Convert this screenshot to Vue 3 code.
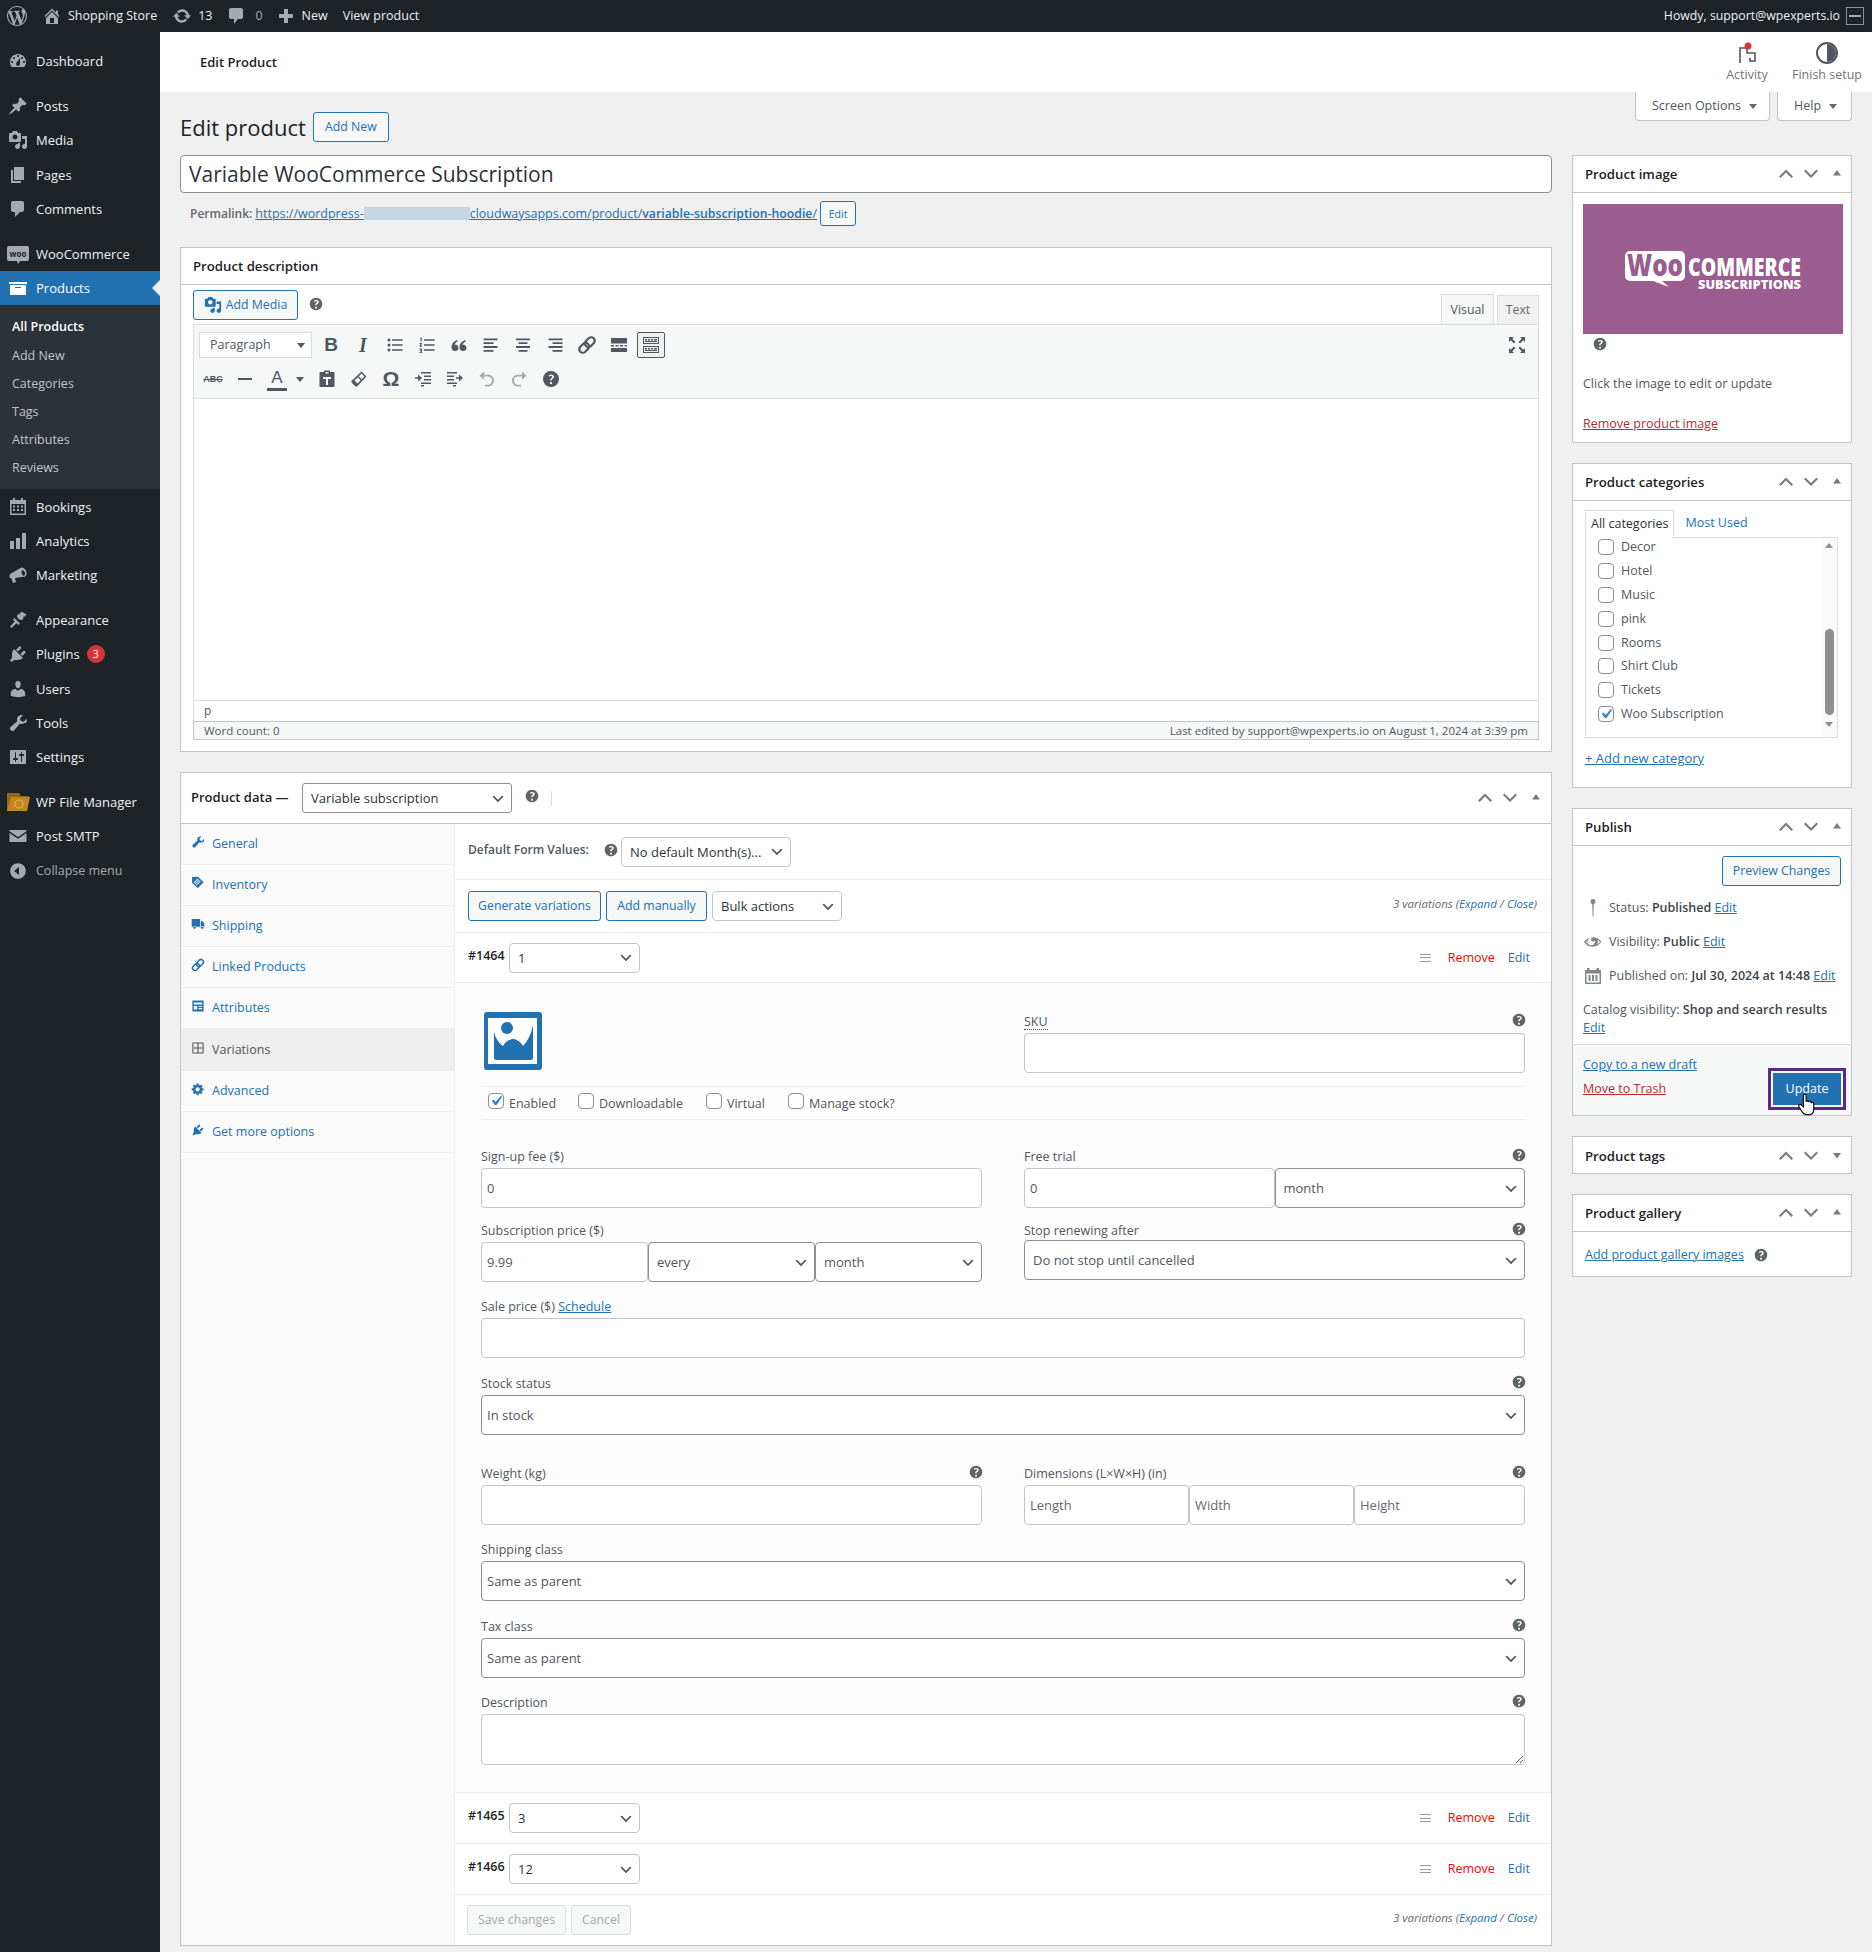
<template>
  <div class="page">
    <header class="adminbar">
      <Icon name="wp" class="bar-wp" />
      <Icon name="home" class="bar-home" />
      <span class="bar-text site">Shopping Store</span>
      <Icon name="update" class="bar-update" />
      <span class="bar-text">13</span>
      <Icon name="comment" class="bar-comment" />
      <span class="bar-text muted">0</span>
      <Icon name="plus" class="bar-plus" />
      <span class="bar-text">New</span>
      <span class="bar-text view">View product</span>
      <span class="bar-text howdy">Howdy, support@wpexperts.io</span>
      <span class="avatar"><i></i></span>
    </header>

    <div class="layout">
      <aside class="sidebar">
        <template v-for="item in menu" :key="item.label">
          <div class="menu-item" :class="{ sep: item.sep, current: item.current, dim: item.dim }">
            <svg v-if="item.icon === 'woo'" class="menu-icon woo-icon" viewBox="0 0 22 22">
              <path d="M2 3h18a2 2 0 0 1 2 2v11a2 2 0 0 1-2 2h-7l-2 3-1-3H2a2 2 0 0 1-2-2V5a2 2 0 0 1 2-2z" fill="#a7aaad" />
              <text x="11" y="13.500" text-anchor="middle" font-size="8" font-weight="700" fill="#1d2327">woo</text>
            </svg>
            <svg v-else-if="item.icon === 'folder'" class="menu-icon folder-icon" viewBox="0 0 24 20">
              <path d="M1 1h12l2 3h8l-2 15H1z" fill="#8f6a1c" />
              <path d="M5 5h19l-3 14H1z" fill="#c2851f" />
              <circle cx="13" cy="12" r="4" fill="none" stroke="#e0b266" stroke-width="1.200" />
            </svg>
            <Icon v-else :name="item.icon" class="menu-icon" />
            <span>{{ item.label }}</span>
            <b v-if="item.badge" class="badge">{{ item.badge }}</b>
          </div>
          <div v-if="item.current" class="submenu">
            <div v-for="(sub, i) in submenu" :key="sub" class="sub-item" :class="{ on: i === 0 }">{{ sub }}</div>
          </div>
        </template>
      </aside>

      <div class="content">
        <div class="wc-header">
          <span class="wc-title">Edit Product</span>
          <div class="activity">
            <svg class="act-icon" viewBox="0 0 24 24">
              <path d="M5 22V7h7v5h8v8h-5v-3" fill="none" stroke="#50575e" stroke-width="1.600" />
              <circle cx="13" cy="5" r="3.500" fill="#d63638" />
            </svg>
            <span>Activity</span>
          </div>
          <div class="activity finish">
            <svg class="act-icon" viewBox="0 0 24 24">
              <circle cx="12" cy="12" r="10" fill="#fff" stroke="#50575e" stroke-width="2" />
              <path d="M12 3a9 9 0 0 1 0 18z" fill="#50575e" />
            </svg>
            <span>Finish setup</span>
          </div>
        </div>

        <div class="head-row">
          <div class="heading">
            <h1>Edit product</h1>
            <a class="btn add-new">Add New</a>
          </div>
          <div class="screen-tabs">
            <div class="screen-tab options">Screen Options <i class="tri"></i></div>
            <div class="screen-tab help-tab">Help <i class="tri"></i></div>
          </div>
        </div>

        <div class="columns">
          <div class="main-col">
            <input class="title-input" type="text" value="Variable WooCommerce Subscription" />
            <div class="permalink">
              <b>Permalink:</b>
              <a class="link perma">https://wordpress-<span class="blur"></span>cloudwaysapps.com/product/<b>variable-subscription-hoodie</b>/</a>
              <a class="btn small-btn">Edit</a>
            </div>

            <section class="box desc-box">
              <h2 class="box-title">Product description</h2>
              <div class="editor">
                <div class="editor-top">
                  <a class="btn media-btn"><Icon name="media" class="media-icon" />Add Media</a>
                  <Icon name="help" class="help media-help" />
                  <div class="editor-tabs">
                    <span class="etab on">Visual</span>
                    <span class="etab">Text</span>
                  </div>
                </div>
                <div class="toolbar">
                  <div class="tb-row">
                    <div class="format">Paragraph<i class="tri dark"></i></div>
                    <span class="tb tb-first txt-b">B</span>
                    <span class="tb txt-i">I</span>
                    <Icon v-for="n in row1" :key="n" :name="n" class="tb" />
                    <span class="tb sink"><Icon name="sink" /></span>
                    <Icon name="fullscreen" class="tb tb-full" />
                  </div>
                  <div class="tb-row">
                    <span class="tb txt-abc">ABC</span>
                    <Icon name="hr" class="tb" />
                    <span class="tb color-btn"><span class="txt-a">A</span></span>
                    <i class="tri dark color-tri"></i>
                    <Icon v-for="n in row2a" :key="n" :name="n" class="tb" />
                    <span class="tb txt-omega">Ω</span>
                    <Icon v-for="n in row2b" :key="n" :name="n" class="tb" :class="{ off: n === 'undo' || n === 'redo' }" />
                  </div>
                </div>
                <div class="edit-area"></div>
                <div class="edit-path">p</div>
                <div class="edit-status">
                  <span>Word count: 0</span>
                  <span>Last edited by support@wpexperts.io on August 1, 2024 at 3:39 pm</span>
                </div>
              </div>
            </section>

            <section class="box data-box">
              <div class="data-head">
                <b class="data-label">Product data —</b>
                <select class="sel type-sel"><option>Variable subscription</option></select>
                <Icon name="help" class="help type-help" />
                <i class="data-sep"></i>
                <Icon name="handles" vb="0 0 64 20" class="handles" />
              </div>
              <div class="data-body">
                <ul class="data-tabs">
                  <li v-for="t in dataTabs" :key="t.label" :class="{ on: t.on }">
                    <Icon :name="t.icon" class="dt-icon" />
                    <span>{{ t.label }}</span>
                  </li>
                </ul>
                <div class="data-panel">
                  <div class="defaults-row">
                    <b class="defaults-label">Default Form Values:</b>
                    <Icon name="help" class="help" />
                    <select class="sel soft defaults-sel"><option>No default Month(s)...</option></select>
                  </div>
                  <div class="actions-row">
                    <a class="btn fill-btn gen-btn">Generate variations</a>
                    <a class="btn fill-btn">Add manually</a>
                    <select class="sel soft bulk-sel"><option>Bulk actions</option></select>
                    <span class="count">3 variations (<a class="link plain">Expand</a> / <a class="link plain">Close</a>)</span>
                  </div>
                  <div class="var-row">
                    <b class="var-id">#1464</b>
                    <select class="sel soft var-sel"><option>1</option></select>
                    <span class="var-tools">
                      <i class="burger"></i>
                      <a class="remove">Remove</a>
                      <a class="link plain">Edit</a>
                    </span>
                  </div>

                  <div class="var-form">
                    <div class="form-top">
                      <svg class="thumb" viewBox="0 0 58 58">
                        <rect width="58" height="58" rx="3" fill="#2271b1" />
                        <rect x="4" y="6" width="49" height="46" fill="#fff" />
                        <path d="M10 19c1 7 5 12 9 15 3-5 7-7 10-7s7 2 10 7c4-4 8-11 10-21v33a2 2 0 0 1-2 2H12a2 2 0 0 1-2-2z" fill="#2271b1" />
                        <circle cx="23" cy="16" r="6" fill="#2271b1" />
                      </svg>
                      <div class="field sku">
                        <label class="lab"><span class="dotted">SKU</span><Icon name="help" class="help" /></label>
                        <input class="inp" type="text" />
                      </div>
                    </div>

                    <div class="checks">
                      <label class="chk enabled"><input type="checkbox" checked /><span>Enabled</span></label>
                      <label class="chk down"><input type="checkbox" /><span>Downloadable</span></label>
                      <label class="chk virt"><input type="checkbox" /><span>Virtual</span></label>
                      <label class="chk"><input type="checkbox" /><span>Manage stock?</span></label>
                    </div>

                    <div class="cols first-cols">
                      <div class="field">
                        <label class="lab"><span>Sign-up fee ($)</span></label>
                        <input class="inp" type="text" value="0" />
                      </div>
                      <div class="field">
                        <label class="lab"><span>Free trial</span><Icon name="help" class="help" /></label>
                        <div class="joined half">
                          <input class="inp" type="text" value="0" />
                          <select class="sel tall"><option>month</option></select>
                        </div>
                      </div>
                    </div>

                    <div class="cols">
                      <div class="field">
                        <label class="lab"><span>Subscription price ($)</span></label>
                        <div class="joined thirds">
                          <input class="inp" type="text" value="9.99" />
                          <select class="sel tall"><option>every</option></select>
                          <select class="sel tall"><option>month</option></select>
                        </div>
                      </div>
                      <div class="field stop-field">
                        <label class="lab"><span>Stop renewing after</span><Icon name="help" class="help" /></label>
                        <select class="sel tall"><option>Do not stop until cancelled</option></select>
                      </div>
                    </div>

                    <div class="field">
                      <label class="lab"><span>Sale price ($) <a class="link">Schedule</a></span></label>
                      <input class="inp" type="text" />
                    </div>

                    <div class="field wide-gap">
                      <label class="lab"><span>Stock status</span><Icon name="help" class="help" /></label>
                      <select class="sel tall near"><option>In stock</option></select>
                    </div>

                    <div class="cols weight-cols">
                      <div class="field">
                        <label class="lab"><span>Weight (kg)</span><Icon name="help" class="help" /></label>
                        <input class="inp" type="text" />
                      </div>
                      <div class="field">
                        <label class="lab"><span>Dimensions (L×W×H) (in)</span><Icon name="help" class="help" /></label>
                        <div class="joined dims">
                          <input class="inp" type="text" placeholder="Length" />
                          <input class="inp" type="text" placeholder="Width" />
                          <input class="inp" type="text" placeholder="Height" />
                        </div>
                      </div>
                    </div>

                    <div class="field">
                      <label class="lab"><span>Shipping class</span></label>
                      <select class="sel tall near"><option>Same as parent</option></select>
                    </div>
                    <div class="field wide-gap">
                      <label class="lab"><span>Tax class</span><Icon name="help" class="help" /></label>
                      <select class="sel tall near"><option>Same as parent</option></select>
                    </div>
                    <div class="field">
                      <label class="lab"><span>Description</span><Icon name="help" class="help" /></label>
                      <textarea class="inp area"></textarea>
                    </div>
                  </div>

                  <div v-for="v in otherVariations" :key="v.id" class="var-row tall-row">
                    <b class="var-id">#{{ v.id }}</b>
                    <select class="sel soft var-sel"><option>{{ v.value }}</option></select>
                    <span class="var-tools">
                      <i class="burger"></i>
                      <a class="remove">Remove</a>
                      <a class="link plain">Edit</a>
                    </span>
                  </div>

                  <div class="actions-row last">
                    <a class="btn off-btn save-btn">Save changes</a>
                    <a class="btn off-btn">Cancel</a>
                    <span class="count">3 variations (<a class="link plain">Expand</a> / <a class="link plain">Close</a>)</span>
                  </div>
                </div>
              </div>
            </section>
          </div>

          <aside class="side-col">
            <section class="box side-box image-box">
              <div class="side-head"><h2>Product image</h2><Icon name="handles" vb="0 0 64 20" class="handles" /></div>
              <div class="side-body">
                <svg class="woo-logo" viewBox="0 0 260 130">
                  <rect width="260" height="130" fill="#9b5c8f" />
                  <path d="M47 47h50a5 5 0 0 1 5 5v20a5 5 0 0 1-5 5H79l7 6-16-6H47a5 5 0 0 1-5-5V52a5 5 0 0 1 5-5z" fill="#fff" />
                  <text x="44" y="72" font-size="30" font-weight="800" fill="#9b5c8f" textLength="56" lengthAdjust="spacingAndGlyphs">Woo</text>
                  <text x="105" y="72" font-size="24" font-weight="800" fill="#fff" textLength="113" lengthAdjust="spacingAndGlyphs">COMMERCE</text>
                  <text x="115" y="85" font-size="13" font-weight="800" fill="#fff" textLength="103" lengthAdjust="spacingAndGlyphs">SUBSCRIPTIONS</text>
                </svg>
                <Icon name="help" class="help image-help" />
                <p class="image-note">Click the image to edit or update</p>
                <a class="danger-link">Remove product image</a>
              </div>
            </section>

            <section class="box side-box cat-box">
              <div class="side-head"><h2>Product categories</h2><Icon name="handles" vb="0 0 64 20" class="handles" /></div>
              <div class="cat-body">
                <div class="cat-tabs">
                  <span class="cat-tab on">All categories</span>
                  <a class="cat-tab link plain">Most Used</a>
                </div>
                <div class="cat-list">
                  <div class="cat-items">
                    <label v-for="c in categories" :key="c" class="cat-item">
                      <input type="checkbox" :checked="c === 'Woo Subscription'" /><span>{{ c }}</span>
                    </label>
                  </div>
                  <div class="scrollbar">
                    <i class="sb-up"></i>
                    <i class="sb-thumb"></i>
                    <i class="sb-down"></i>
                  </div>
                </div>
                <a class="link add-cat">+ Add new category</a>
              </div>
            </section>

            <section class="box side-box publish-box">
              <div class="side-head"><h2>Publish</h2><Icon name="handles" vb="0 0 64 20" class="handles" /></div>
              <div class="pub-body">
                <div class="pub-preview"><a class="btn">Preview Changes</a></div>
                <div class="pub-row"><Icon name="pin" class="pub-icon" /><span>Status: <b>Published</b> <a class="link">Edit</a></span></div>
                <div class="pub-row"><Icon name="eye" class="pub-icon" /><span>Visibility: <b>Public</b> <a class="link">Edit</a></span></div>
                <div class="pub-row"><Icon name="calendar" class="pub-icon" /><span>Published on: <b>Jul 30, 2024 at 14:48</b> <a class="link">Edit</a></span></div>
                <div class="pub-catalog">Catalog visibility: <b>Shop and search results</b><br /><a class="link">Edit</a></div>
              </div>
              <div class="pub-foot">
                <div class="pub-links">
                  <a class="link">Copy to a new draft</a>
                  <a class="danger-link">Move to Trash</a>
                </div>
                <div class="update-wrap">
                  <a class="update-btn">Update</a>
                  <svg class="cursor" viewBox="0 0 20 26">
                    <path d="M6 2.500c0-2 3-2 3 0v7c.5-1.500 3-1.500 3 .3.500-1.300 2.800-1 2.800.7.800-1 2.700-.5 2.700 1.200v6c0 3-1.500 6-5 6H9c-2.500 0-3.500-1.500-5-4l-3-5c-1-2 1.500-3.200 3-1.500l2 2z" fill="#fff" stroke="#000" stroke-width="1.200" />
                  </svg>
                </div>
              </div>
            </section>

            <section class="box side-box tags-box">
              <div class="side-head"><h2>Product tags</h2><Icon name="handlesDown" vb="0 0 64 20" class="handles" /></div>
            </section>

            <section class="box side-box gallery-box">
              <div class="side-head"><h2>Product gallery</h2><Icon name="handles" vb="0 0 64 20" class="handles" /></div>
              <div class="gallery-body">
                <a class="link">Add product gallery images</a>
                <Icon name="help" class="help" />
              </div>
            </section>
          </aside>
        </div>
      </div>
    </div>
  </div>
</template>

<script setup>
import { h } from 'vue'

const icons = {
  wp: 'M20 10c0-5.510-4.490-10-10-10C4.480 0 0 4.490 0 10c0 5.520 4.480 10 10 10 5.510 0 10-4.480 10-10zM7.780 15.370L4.370 6.220c.55-.02 1.170-.08 1.170-.08.5-.06.44-1.130-.06-1.110 0 0-1.450.11-2.370.11-.18 0-.37 0-.58-.01C4.120 2.690 6.870 1.110 10 1.110c2.330 0 4.450.87 6.050 2.340-.68-.11-1.650.39-1.650 1.580 0 .74.45 1.360.9 2.100.35.61.55 1.360.55 2.460 0 1.490-1.400 5-1.400 5l-3.030-8.370c.54-.02.82-.17.82-.17.5-.05.44-1.250-.06-1.220 0 0-1.440.12-2.380.12-.87 0-2.330-.12-2.330-.12-.5-.03-.56 1.200-.06 1.220l.92.08 1.260 3.410zM17.410 10c.24-.64.74-1.870.43-4.250.7 1.290 1.050 2.710 1.050 4.250 0 3.290-1.730 6.240-4.400 7.780.97-2.590 1.940-5.200 2.920-7.780zM6.100 18.090C3.120 16.650 1.110 13.530 1.110 10c0-1.300.23-2.480.72-3.590C3.250 10.300 4.670 14.200 6.100 18.090zm4.030-6.630l2.580 6.980c-.86.29-1.760.45-2.710.45-.79 0-1.570-.11-2.290-.33.81-2.380 1.620-4.730 2.420-7.100z',
  home: 'M16 8.500l1.530 1.530-1.060 1.060L10 4.620l-6.470 6.470-1.060-1.060L10 2.500l4 4v-2h2v4zm-6-2.460l6 5.990V18H4v-5.970zM12 17v-5H8v5h4z',
  update: 'M10.200 3.280c3.530 0 6.430 2.610 6.920 6h2.080l-3.500 4-3.500-4h2.320c-.45-1.970-2.210-3.440-4.320-3.440-1.450 0-2.730.71-3.540 1.780L4.950 5.660C6.230 4.200 8.110 3.280 10.200 3.280zm-.4 13.440c-3.520 0-6.430-2.610-6.920-6H.8l3.500-4c1.170 1.330 2.330 2.670 3.500 4H5.480c.45 1.970 2.210 3.440 4.320 3.440 1.450 0 2.730-.71 3.540-1.770l1.710 1.950c-1.280 1.460-3.150 2.380-5.250 2.380z',
  comment: 'M5 2h10c1.100 0 2 .9 2 2v7c0 1.100-.9 2-2 2h-3l-4 5v-5H5c-1.100 0-2-.9-2-2V4c0-1.100.9-2 2-2z',
  plus: 'M17 8v4h-5v5H8v-5H3V8h5V3h4v5z',
  dashboard: 'M3.760 16h12.480c1.100-1.370 1.760-3.110 1.760-5 0-4.420-3.580-8-8-8s-8 3.580-8 8c0 1.890.66 3.630 1.760 5zM10 4c.55 0 1 .45 1 1s-.45 1-1 1-1-.45-1-1 .45-1 1-1zM6 6c.55 0 1 .45 1 1s-.45 1-1 1-1-.45-1-1 .45-1 1-1zm8 0c.55 0 1 .45 1 1s-.45 1-1 1-1-.45-1-1 .45-1 1-1zm-5.370 5.550L12 7v6c0 1.100-.9 2-2 2s-2-.9-2-2c0-.57.24-1.080.63-1.450zM4 10c.55 0 1 .45 1 1s-.45 1-1 1-1-.45-1-1 .45-1 1-1zm12 0c.55 0 1 .45 1 1s-.45 1-1 1-1-.45-1-1 .45-1 1-1z',
  post: 'M10.440 3.020l1.820-1.820 6.360 6.350-1.830 1.820c-1.050-.68-2.480-.57-3.410.36l-.75.75c-.92.93-1.040 2.350-.35 3.410l-1.830 1.820-2.410-2.410-2.800 2.790c-.42.42-3.380 2.710-3.800 2.290s1.860-3.390 2.280-3.810l2.790-2.790L4.100 9.360l1.830-1.820c1.050.69 2.480.57 3.400-.36l.75-.75c.93-.92 1.050-2.350.36-3.410z',
  media: 'M13 11V4c0-.55-.45-1-1-1h-1.670L9 1H5L3.670 3H2c-.55 0-1 .45-1 1v7c0 .55.45 1 1 1h10c.55 0 1-.45 1-1zM7 4.500c1.380 0 2.500 1.120 2.500 2.500S8.380 9.500 7 9.500 4.500 8.380 4.500 7 5.620 4.500 7 4.500zM14 6h5v10.500c0 1.380-1.120 2.500-2.500 2.500S14 17.880 14 16.500s1.120-2.500 2.500-2.500c.17 0 .34.02.5.05V9h-3V6zm-4 8.050V13h2v3.500c0 1.380-1.120 2.500-2.500 2.500S7 17.880 7 16.500 8.120 14 9.500 14c.17 0 .34.02.5.05z',
  page: 'M6 15V2h10v13H6zm-1 1h8v2H3V5h2v11z',
  comments: 'M5 2h9c1.100 0 2 .9 2 2v7c0 1.100-.9 2-2 2h-2l-5 5v-5H5c-1.100 0-2-.9-2-2V4c0-1.100.9-2 2-2z',
  archive: 'M19 4v2H1V4h18zM2 7h16v10H2V7zm11 3V9H7v1h6z',
  bookings: 'M5 1h2v2h6V1h2v2h3v15H2V3h3zM3.500 7v9.500h13V7zM5 8.500h2v2H5zM9 8.500h2v2H9zM13 8.500h2v2h-2zM5 12h2v2H5zM9 12h2v2H9zM13 12h2v2h-2z',
  chart: 'M18 18V2h-4v16h4zm-6 0V7H8v11h4zm-6 0v-8H2v8h4z',
  megaphone: 'M18.150 5.940c.46 1.620.38 3.220-.02 4.260-.41 1.040-1.170 1.550-1.970 1.490L7 13l1 4-3 1-1.500-4.600c-.9-.1-1.700-.6-2-1.600-.4-1.500.4-2.800 1.500-3.300L12.500 3c1-.7 2.100-.7 3 .1.800.7 2.200 1.400 2.650 2.840zM14.600 5.200c-.9.200-1.300 1.600-.9 3.100.4 1.500 1.400 2.500 2.300 2.300.9-.2 1.300-1.600.9-3.100-.4-1.500-1.400-2.500-2.300-2.300z',
  brush: 'M13.500 1.500l5 3c-.8 1.500-2 2.500-3 2l-.5 3-3 .5-3-3 .5-2.500c1.700-.3 3-1.300 4-3zM6.500 8l5.500 5.500-1.800 1.500-1.700-1.700-4.500 4.200c-1 .9-2.400-.5-1.500-1.500l4.200-4.500L5 9.800z',
  plugin: 'M13.110 4.360L9.870 7.600 8 5.730l3.240-3.240c.35-.34 1.050-.2 1.560.32.52.51.66 1.210.31 1.550zm-8 1.770l.91-1.120 9.010 9.010-1.190.84c-.71.71-2.630 1.160-3.820 1.160H6.140L4.900 17.260c-.59.59-1.540.59-2.120 0-.59-.58-.59-1.530 0-2.120l1.240-1.240v-3.880c0-1.130.4-3.190 1.090-3.890zm7.260 3.970l3.240-3.240c.34-.35 1.040-.21 1.550.31.52.51.66 1.210.31 1.550l-3.240 3.250z',
  users: 'M10 9.250c-2.270 0-2.730-3.440-2.730-3.440C7 4.020 7.820 2 9.970 2c2.160 0 2.980 2.020 2.710 3.810 0 0-.41 3.440-2.680 3.440zm0 2.570L12.720 10c2.390 0 4.520 2.330 4.520 4.530v2.490s-3.650 1.130-7.240 1.130c-3.650 0-7.240-1.130-7.240-1.130v-2.490c0-2.250 1.940-4.480 4.470-4.480z',
  tools: 'M16.680 9.770c-1.340 1.340-3.300 1.670-4.950.99l-5.410 6.520c-.99.99-2.590.99-3.570 0-.99-.98-.99-2.580 0-3.570l6.520-5.420c-.68-1.650-.35-3.610.99-4.950 1.280-1.280 3.120-1.620 4.710-1.050l-2.900 2.900.85 2.700 2.710.84 2.900-2.900c.57 1.590.23 3.430-1.050 4.710z',
  settings: 'M18 16V4c0-.55-.45-1-1-1H3c-.55 0-1 .45-1 1v12c0 .55.45 1 1 1h14c.55 0 1-.45 1-1zM8 11h1c.55 0 1 .45 1 1s-.45 1-1 1H8v1.500c0 .28-.22.5-.5.5s-.5-.22-.5-.5V13H6c-.55 0-1-.45-1-1s.45-1 1-1h1V5.500c0-.28.22-.5.5-.5s.5.22.5.5V11zm5-2h-1c-.55 0-1-.45-1-1s.45-1 1-1h1V5.500c0-.28.22-.5.5-.5s.5.22.5.5V7h1c.55 0 1 .45 1 1s-.45 1-1 1h-1v5.500c0 .28-.22.5-.5.5s-.5-.22-.5-.5V9z',
  email: 'M2 4h16c.3 0 .5.2.5.5v.8L10 11 1.500 5.300v-.8c0-.3.2-.5.5-.5zM1.500 7l8.500 5.700L18.500 7v8.500c0 .3-.2.5-.5.5H2c-.3 0-.5-.2-.5-.5z',
  collapse: 'M10 2.160c4.330 0 7.840 3.510 7.840 7.840 0 4.330-3.510 7.840-7.840 7.840-4.330 0-7.840-3.510-7.840-7.840 0-4.330 3.510-7.840 7.840-7.840zM11 14V6l-5 4z',
  help: 'M17 10c0-3.870-3.140-7-7-7-3.870 0-7 3.130-7 7 0 3.860 3.130 7 7 7 3.860 0 7-3.140 7-7zm-6.300 1.480H9.110v-.43c0-.38.08-.7.24-.98s.46-.57.88-.89c.41-.29.68-.53.81-.72.14-.19.2-.39.2-.63 0-.25-.09-.44-.28-.58-.19-.13-.45-.2-.79-.2-.58 0-1.250.19-2 .57l-.64-1.280c.87-.49 1.800-.74 2.770-.74.81 0 1.450.2 1.930.59.48.39.72.91.72 1.550 0 .43-.1.8-.29 1.110-.19.32-.57.67-1.110 1.060-.38.28-.61.49-.71.64-.09.14-.14.33-.14.57v.3zm-1.440 3.400c-.19-.18-.28-.43-.28-.75 0-.33.09-.59.27-.76.18-.18.44-.27.78-.27.33 0 .59.09.77.27.18.18.27.43.27.76 0 .32-.09.57-.27.75s-.44.27-.77.27c-.34 0-.6-.09-.77-.27z',
  handles: 'M0 12.500L7 5.500l7 7-1.500 1.500L7 8.500 1.500 14zM25 7l1.500-1.500L32 11l5.500-5.500L39 7l-7 7zM54 11.500l4-5.500 4 5.500z',
  handlesDown: 'M0 12.500L7 5.500l7 7-1.500 1.500L7 8.500 1.500 14zM25 7l1.500-1.500L32 11l5.500-5.500L39 7l-7 7zM54 7l4 5.500L62 7z',
  ul: 'M2.500 5a1.500 1.500 0 1 0 3 0 1.500 1.500 0 1 0-3 0zM2.500 10a1.500 1.500 0 1 0 3 0 1.500 1.500 0 1 0-3 0zM2.500 15a1.500 1.500 0 1 0 3 0 1.500 1.500 0 1 0-3 0zM7 4.300h10.500v1.400H7zM7 9.300h10.500v1.400H7zM7 14.300h10.500v1.400H7z',
  ol: 'M3.500 2.500h1.200v4H3.500zM2.500 8h2.500v1.200L3.800 10.800H5v1H2.500v-1l1.300-1.600H2.500zM2.500 13.500H5v4.500H2.500v-1h1.300v-.7H2.800v-1h1v-.8H2.500zM7 4.300h10.500v1.400H7zM7 9.300h10.500v1.400H7zM7 14.300h10.500v1.400H7z',
  quote: 'M9.500 13.200c0 1.700-1.400 2.800-3.300 2.800-2.200 0-3.700-1.500-3.700-3.800C2.500 9 4.900 6.200 8 5l.8 1.300C7.200 7 6 8.400 5.600 9.900c.3-.1.7-.2 1.100-.2 1.600 0 2.800 1.600 2.800 3.500zM17.500 13.200c0 1.700-1.400 2.800-3.300 2.800-2.200 0-3.700-1.500-3.700-3.800 0-3.200 2.400-6 5.500-7.200l.8 1.300c-1.600.7-2.800 2.100-3.200 3.600.3-.1.7-.2 1.100-.2 1.600 0 2.800 1.600 2.800 3.500z',
  alignL: 'M2.500 3.500h14v1.800h-14zM2.500 7.300h10v1.800h-10zM2.500 11.100h14v1.800h-14zM2.500 14.900h10v1.800h-10z',
  alignC: 'M3 3.500h14v1.800H3zM5.500 7.300h9v1.800h-9zM3 11.100h14v1.800H3zM5.500 14.900h9v1.800h-9z',
  alignR: 'M3.500 3.500h14v1.800h-14zM7.500 7.300h10v1.800h-10zM3.500 11.100h14v1.800h-14zM7.500 14.900h10v1.800h-10z',
  more: 'M2 3h16v5.500H2zM2 10h3v1.500H2zM6.500 10h3v1.500h-3zM11 10h3v1.500h-3zM15.500 10H18v1.500h-2.500zM2 13h16v4H2z',
  sink: 'M2 2h16v7H2zM3 3v5h14V3zM4 4h2v1.500H4zM7 4h2v1.500H7zM10 4h2v1.500h-2zM13 4h3v1.500h-3zM4 6h12v1H4zM2 11h16v7H2zM3 12v5h14v-5zM4 13h2v1.500H4zM7 13h2v1.500H7zM10 13h2v1.500h-2zM13 13h3v1.500h-3zM4 15h12v1H4z',
  fullscreen: 'M2 2h5L5.300 3.700 8.500 7 7 8.500 3.700 5.300 2 7zM18 2v5l-1.700-1.700L13 8.500 11.500 7l3.200-3.300L13 2zM2 18v-5l1.700 1.700L7 11.500 8.500 13l-3.200 3.300L7 18zM18 18h-5l1.700-1.700L11.500 13l1.500-1.500 3.300 3.200L18 13z',
  hr: 'M3 9h14v2H3z',
  paste: 'M7 1.500h6V3h3.500c.6 0 1 .4 1 1v13c0 .6-.4 1-1 1h-13c-.6 0-1-.4-1-1V4c0-.6.4-1 1-1H7zM8.500 3v1.500h3V3zM6 8v2h3v6h2v-6h3V8z',
  eraser: 'M12.500 2.500l5 5-9 9.500c-.8.800-1.800.800-2.500 0L3 14c-.8-.8-.8-1.800 0-2.500zM12.500 4.500l-7 7 3 3 7-7zM9.700 7.300l3 3-1 1-3-3z',
  outdent: 'M8 3h10v1.600H8zM11 6.500h7v1.600h-7zM11 10h7v1.600h-7zM8 13.500h10v1.600H8zM9 9 5 5.500v2.700H2v1.600h3v2.700zM8 16h3v1.500H8z',
  indent: 'M2 3h10v1.600H2zM2 6.500h7v1.600H2zM2 10h7v1.600H2zM2 13.500h10v1.600H2zM14 5.500l4 3.500-4 3.500v-2.700h-3V8.200h3zM8 16h3v1.500H8z',
  undo: 'M7 2.500v3.200h4c3.300 0 6 2.500 6 5.700s-2.700 6.100-6 6.100H8v-1.800h3c2.300 0 4.100-2 4.100-4.300S13.300 7.600 11 7.600H7v3.200L2.500 6.700z',
  redo: 'M13 2.500v3.200H9c-3.300 0-6 2.500-6 5.700s2.700 6.100 6 6.100h3v-1.800H9c-2.300 0-4.100-2-4.100-4.300S6.700 7.600 9 7.600h4v3.200l4.500-4.100z',
  helpFull: 'M10 2a8 8 0 1 0 0 16 8 8 0 0 0 0-16zm.7 9.480H9.110v-.43c0-.38.08-.7.24-.98s.46-.57.88-.89c.41-.29.68-.53.81-.72.14-.19.2-.39.2-.63 0-.25-.09-.44-.28-.58-.19-.13-.45-.2-.79-.2-.58 0-1.250.19-2 .57l-.64-1.280c.87-.49 1.800-.74 2.770-.74.81 0 1.450.2 1.930.59.48.39.72.91.72 1.550 0 .43-.1.8-.29 1.110-.19.32-.57.67-1.110 1.060-.38.28-.61.49-.71.64-.09.14-.14.33-.14.57v.3zm-1.440 3.400c-.19-.18-.28-.43-.28-.75 0-.33.09-.59.27-.76.18-.18.44-.27.78-.27.33 0 .59.09.77.27.18.18.27.43.27.76 0 .32-.09.57-.27.75s-.44.27-.77.27c-.34 0-.6-.09-.77-.27z',
  wrench: 'M16.680 9.770c-1.340 1.340-3.300 1.670-4.950.99l-5.410 6.520c-.99.99-2.590.99-3.570 0-.99-.98-.99-2.580 0-3.570l6.520-5.420c-.68-1.650-.35-3.610.99-4.950 1.280-1.280 3.120-1.620 4.710-1.050l-2.900 2.900.85 2.700 2.710.84 2.900-2.900c.57 1.590.23 3.430-1.050 4.710z',
  tag: 'M10 1l8 8-8.500 8.500-8-8V1.500zM9.600 3.400L3.700 9.300l.9.900 5.900-5.900zM11.300 5.100l-5.900 5.900.9.900 5.900-5.900zM13 6.800l-5.900 5.900.9.900 5.900-5.900z',
  truck: 'M1 3h12v11H1zM14 6h3l2 3.500V14h-5zM4 13a2 2 0 1 1 0 3.500A2 2 0 0 1 4 13zM15 13a2 2 0 1 1 0 3.500 2 2 0 0 1 0-3.500z',
  attrs: 'M2 2h16v16H2zM4 5v3h12V5zM4 10v5h5v-5zM11 10v1.500h5V10zM11 13v1.500h5V13z',
  grid: 'M2 2h16v16H2zM3.500 3.500v5.700h5.700V3.500zM10.800 3.500v5.700h5.700V3.500zM3.500 10.800v5.700h5.700v-5.700zM10.800 10.800v5.700h5.700v-5.700z',
  gear: 'M18 12h-2.180c-.17.7-.44 1.350-.81 1.930l1.540 1.540-2.100 2.100-1.540-1.540c-.58.36-1.230.64-1.910.81V19H8v-2.180c-.68-.17-1.330-.45-1.910-.81l-1.540 1.540-2.120-2.120 1.540-1.540c-.36-.58-.63-1.230-.8-1.890H1V9h2.180c.17-.7.44-1.350.8-1.930L2.450 5.530l2.100-2.100 1.540 1.540C6.670 4.610 7.320 4.340 8 4.170V2h3v2.180c.68.170 1.330.44 1.910.8l1.540-1.540 2.120 2.120-1.540 1.540c.36.58.64 1.230.81 1.900H18zm-8.500 1.500c1.660 0 3-1.340 3-3s-1.340-3-3-3-3 1.340-3 3 1.340 3 3 3z',
  pin: 'M7.500 3c0-1.100 1.100-2 2.500-2s2.500.9 2.500 2c0 1-.6 2.800-1.800 3.400l-.3 12c0 .4-.8.4-.8 0L9.300 6.400C8.100 5.800 7.500 4 7.500 3z',
  eye: 'M18.300 9.500C15 4.900 8.500 3.800 3.900 7.200 2.700 8 1.700 9 1 10c3 4.800 9.500 6.100 14.300 3 1.300-.8 2.300-2 3-3.500zM10 5.500a2 2 0 1 0 0 4c.7 0 1.400-.4 1.700-1 .6 2-.5 4-2.500 4.600-2.100.5-4.200-.6-4.700-2.600-.3-1.300 0-2.600.9-3.600 1.200-1.100 3-1.600 4.600-1.400zM3 10c.7-.9 1.500-1.700 2.500-2.300-.7 1.500-.6 3.200.2 4.600C4.700 11.700 3.800 10.900 3 10zm14 0c-.8.900-1.700 1.700-2.700 2.300.8-1.400.9-3.100.2-4.600 1 .6 1.800 1.400 2.500 2.300z',
  calendar: 'M4 2h2.500v2h7V2H16v2h2v14H2V4h2zM3.500 7.500v9h13v-9zM5.500 9h2v6h-2zM9 9h2v6H9zM12.500 9h2v6h-2z'
}

// one helper for the dashicon style glyphs; the chain link is drawn with strokes
const Icon = (props) => {
  if (props.name === 'chain') {
    return h('svg', { viewBox: '0 0 20 20' }, [
      h('g', { fill: 'none', stroke: 'currentColor', 'stroke-width': 2.200, transform: 'rotate(-45 10 10)' }, [
        h('rect', { x: 0.500, y: 6.500, width: 11, height: 7, rx: 3.500 }),
        h('rect', { x: 8.500, y: 6.500, width: 11, height: 7, rx: 3.500 })
      ])
    ])
  }
  return h('svg', { viewBox: props.vb || '0 0 20 20' }, [
    h('path', { d: icons[props.name], 'fill-rule': 'evenodd', fill: 'currentColor' })
  ])
}
Icon.props = ['name', 'vb']

const menu = [
  { label: 'Dashboard', icon: 'dashboard' },
  { label: 'Posts', icon: 'post', sep: true },
  { label: 'Media', icon: 'media' },
  { label: 'Pages', icon: 'page' },
  { label: 'Comments', icon: 'comments' },
  { label: 'WooCommerce', icon: 'woo', sep: true },
  { label: 'Products', icon: 'archive', current: true },
  { label: 'Bookings', icon: 'bookings' },
  { label: 'Analytics', icon: 'chart' },
  { label: 'Marketing', icon: 'megaphone' },
  { label: 'Appearance', icon: 'brush', sep: true },
  { label: 'Plugins', icon: 'plugin', badge: 3 },
  { label: 'Users', icon: 'users' },
  { label: 'Tools', icon: 'tools' },
  { label: 'Settings', icon: 'settings' },
  { label: 'WP File Manager', icon: 'folder', sep: true },
  { label: 'Post SMTP', icon: 'email' },
  { label: 'Collapse menu', icon: 'collapse', dim: true }
]
const submenu = ['All Products', 'Add New', 'Categories', 'Tags', 'Attributes', 'Reviews']

const row1 = ['ul', 'ol', 'quote', 'alignL', 'alignC', 'alignR', 'chain', 'more']
const row2a = ['paste', 'eraser']
const row2b = ['outdent', 'indent', 'undo', 'redo', 'helpFull']

const dataTabs = [
  { label: 'General', icon: 'wrench' },
  { label: 'Inventory', icon: 'tag' },
  { label: 'Shipping', icon: 'truck' },
  { label: 'Linked Products', icon: 'chain' },
  { label: 'Attributes', icon: 'attrs' },
  { label: 'Variations', icon: 'grid', on: true },
  { label: 'Advanced', icon: 'gear' },
  { label: 'Get more options', icon: 'plugin' }
]

const otherVariations = [
  { id: 1465, value: '3' },
  { id: 1466, value: '12' }
]

const categories = ['Decor', 'Hotel', 'Music', 'pink', 'Rooms', 'Shirt Club', 'Tickets', 'Woo Subscription']
</script>

<style>
html, body { margin: 0; background: #f0f0f1; }
</style>

<style scoped>
.page {
  height: 1952px;
  overflow: hidden;
  font: 13px/18px "Open Sans", "Noto Sans", sans-serif;
  color: #50575e;
  background: #f0f0f1;
}
* { box-sizing: border-box; }
b { font-weight: 600; color: #2c3338; }
a { cursor: pointer; }
.link { color: #2271b1; text-decoration: underline; }
.link b { color: #2271b1; }
.link.plain { text-decoration: none; }
.danger-link { color: #b32d2e; text-decoration: underline; }

/* admin bar */
.adminbar {
  height: 32px;
  background: #1d2327;
  display: flex;
  align-items: center;
  color: #a7aaad;
  font-size: 12.500px;
}
.adminbar svg { flex: none; }
.bar-text { color: #f0f0f1; white-space: nowrap; }
.bar-text.muted { color: #a7aaad; margin-left: 9px; }
.bar-wp { width: 20px; height: 20px; margin-left: 7px; }
.bar-home { width: 20px; height: 20px; margin-left: 15px; }
.site { margin-left: 6px; }
.bar-update { width: 20px; height: 20px; margin-left: 15px; }
.bar-update + .bar-text { margin-left: 6px; }
.bar-comment { width: 20px; height: 20px; margin-left: 14px; }
.bar-plus { width: 20px; height: 20px; margin-left: 13px; }
.bar-plus + .bar-text { margin-left: 6px; }
.view { margin-left: 15px; }
.howdy { margin-left: auto; font-size: 12.300px; }
.avatar {
  width: 18px;
  height: 18px;
  margin: 0 8px 0 6px;
  border: 1px solid #8c8f94;
  background: #1d2327;
  display: flex;
  align-items: center;
  justify-content: center;
}
.avatar i { width: 12px; height: 2px; background: #a7aaad; }

.layout { display: flex; }

/* sidebar */
.sidebar {
  flex: none;
  width: 160px;
  height: 1920px;
  padding-top: 12px;
  background: #1d2327;
}
.menu-item {
  position: relative;
  height: 34.250px;
  display: flex;
  align-items: center;
  color: #f0f0f1;
}
.menu-item.sep { margin-top: 10.800px; }
.menu-icon {
  flex: none;
  width: 20px;
  height: 20px;
  margin: 0 8px;
  color: #a7aaad;
}
.menu-item.dim { color: #a7aaad; font-size: 12.500px; }
.menu-item.current { background: #2271b1; color: #fff; }
.menu-item.current .menu-icon { color: #fff; }
.menu-item.current::after {
  content: "";
  position: absolute;
  right: 0;
  top: 50%;
  margin-top: -8px;
  border: 8px solid transparent;
  border-right-color: #f0f0f1;
  border-left-width: 0;
}
.woo-icon { width: 22px; height: 22px; margin: 0 7px; }
.folder-icon { width: 24px; height: 20px; margin: 0 6px; }
.badge {
  width: 18px;
  height: 18px;
  margin-left: 7px;
  border-radius: 50%;
  background: #d63638;
  color: #fff;
  font-size: 11px;
  font-weight: 400;
  text-align: center;
}
.submenu {
  background: #2c3338;
  padding: 8px 0 7px;
}
.sub-item {
  height: 28.200px;
  line-height: 28px;
  padding-left: 12px;
  font-size: 12.500px;
  color: #c3c4c7;
}
.sub-item.on { color: #fff; font-weight: 600; }

/* content */
.content { flex: 1; min-width: 0; }
.wc-header {
  height: 60px;
  background: #fff;
  display: flex;
  align-items: center;
  padding-left: 40px;
}
.wc-title { font-size: 13px; font-weight: 600; color: #1e1e1e; margin-right: auto; }
.activity {
  width: 80px;
  display: flex;
  flex-direction: column;
  align-items: center;
  font-size: 12.500px;
  color: #757575;
  line-height: 16px;
}
.act-icon { width: 24px; height: 24px; margin-bottom: 2px; }
.finish { margin-right: 5px; white-space: nowrap; }

.head-row {
  height: 63px;
  display: flex;
  justify-content: space-between;
  align-items: flex-start;
  padding: 0 20px 0 20px;
}
.heading { display: flex; align-items: center; margin-top: 20px; }
.heading h1 {
  margin: 0 7px 0 0;
  font-size: 22px;
  line-height: 30px;
  font-weight: 400;
  color: #1d2327;
}
.screen-tabs { display: flex; gap: 7px; }
.screen-tab {
  height: 29px;
  padding: 0 16px;
  display: flex;
  align-items: center;
  gap: 8px;
  background: #fff;
  border: 1px solid #c3c4c7;
  border-top: 0;
  border-radius: 0 0 4px 4px;
  font-size: 12.500px;
  white-space: nowrap;
}
.options { width: 135px; padding-right: 10px; }
.help-tab { width: 75px; }
.tri {
  width: 0;
  height: 0;
  border: 4px solid transparent;
  border-top: 5px solid #646970;
  border-bottom: 0;
}
.tri.dark { border-top-color: #50575e; }

.columns {
  display: flex;
  gap: 20px;
  padding: 0 20px;
}
.main-col { width: 1372px; flex: none; }
.side-col { width: 280px; flex: none; }

.btn {
  display: inline-flex;
  align-items: center;
  justify-content: center;
  height: 30px;
  padding: 0 10px;
  border: 1px solid #2271b1;
  border-radius: 3px;
  background: #f6f7f7;
  color: #2271b1;
  font-size: 12.300px;
  white-space: nowrap;
}
.add-new { width: 76px; background: #f6f7f7; }

.title-input {
  display: block;
  width: 100%;
  height: 38px;
  padding: 0 8px;
  border: 1px solid #8c8f94;
  border-radius: 4px;
  font: 21px "Open Sans", sans-serif;
  color: #2c3338;
  background: #fff;
}
.permalink {
  height: 54px;
  padding: 13px 0 0 10px;
  display: flex;
  align-items: flex-start;
  font-size: 12.500px;
  line-height: 16px;
}
.permalink b { color: #646970; margin-right: 3px; font-size: 12px; }
.permalink .link b { color: #2271b1; margin: 0; font-size: 12.300px; }
.blur {
  display: inline-block;
  width: 106px;
  height: 13px;
  vertical-align: -2px;
  background: #c8d5e3;
}
.small-btn {
  width: 36px;
  height: 25px;
  margin: -5px 0 0 3px;
  padding: 0;
  font-size: 10.500px;
  background: #f6f7f7;
}

.box {
  background: #fff;
  border: 1px solid #c3c4c7;
}
.desc-box {
  height: 505px;
  margin-bottom: 20px;
}
.box-title {
  height: 37px;
  margin: 0;
  padding-left: 12px;
  border-bottom: 1px solid #c3c4c7;
  font-size: 13.200px;
  line-height: 36px;
  font-weight: 600;
  color: #1d2327;
}
.editor { padding: 0 12px; }
.editor-top {
  height: 39px;
  display: flex;
  align-items: flex-start;
  padding-top: 5px;
}
.media-btn { width: 105px; height: 30px; gap: 4px; padding: 0; }
.media-icon { width: 18px; height: 18px; }
.help { width: 18px; height: 18px; color: #5f6468; flex: none; }
.media-help { margin: 5px 0 0 9px; }
.editor-tabs { margin-left: auto; display: flex; gap: 3px; }
.etab {
  width: 42px;
  height: 29px;
  margin-top: 5px;
  display: flex;
  align-items: center;
  justify-content: center;
  background: #f0f0f1;
  border: 1px solid #dcdcde;
  border-bottom: 0;
  font-size: 12.300px;
  color: #646970;
}
.etab.on { width: 53px; background: #f6f7f7; color: #50575e; margin-top: 4px; height: 30px; }

.toolbar {
  height: 75px;
  padding: 7px 7px 0 5px;
  background: #f6f7f7;
  border: 1px solid #dcdcde;
  border-bottom: 1px solid #dcdcde;
  color: #50575e;
}
.tb-row {
  height: 26px;
  margin-bottom: 8px;
  display: flex;
  align-items: center;
  gap: 4px;
}
.format {
  width: 113px;
  height: 26px;
  padding: 0 6px 0 10px;
  display: flex;
  align-items: center;
  justify-content: space-between;
  background: #fff;
  border: 1px solid #dcdcde;
  font-size: 12.500px;
}
.tb {
  flex: none;
  width: 28px;
  height: 26px;
  padding: 3px 4px;
  display: flex;
  align-items: center;
  justify-content: center;
  color: #50575e;
}
.tb-first { margin-left: 1px; }
.txt-b { font: 700 19px "Liberation Sans", sans-serif; }
.txt-i { font: italic 700 20px "Liberation Serif", serif; }
.sink {
  padding: 2px 3px;
  border: 1px solid #50575e;
  border-radius: 2px;
  background: #f0f0f1;
}
.sink svg { width: 20px; height: 20px; }
.tb-full { margin-left: auto; }
.txt-abc { font: 700 9px "Liberation Sans", sans-serif; text-decoration: line-through; }
.color-btn { padding: 0; }
.txt-a {
  width: 20px;
  padding-bottom: 1px;
  text-align: center;
  font: 17px/19px "Liberation Sans", sans-serif;
  border-bottom: 3px solid #50575e;
}
.color-tri { margin: 0 5px 0 1px; }
.txt-omega { font: 700 21px "Liberation Sans", sans-serif; }
.tb.off { color: #a7aaad; }
.edit-area { height: 301px; border-left: 1px solid #dcdcde; border-right: 1px solid #dcdcde; }
.edit-path {
  height: 21px;
  padding-left: 10px;
  border: 1px solid #dcdcde;
  border-bottom: 0;
  font-size: 12px;
  line-height: 20px;
}
.edit-status {
  height: 19px;
  padding: 0 10px;
  display: flex;
  justify-content: space-between;
  background: #f6f7f7;
  border: 1px solid #c3c4c7;
  font-size: 11.500px;
  line-height: 17px;
}

/* product data */
.data-box { height: 1174px; display: flex; flex-direction: column; }
.data-head {
  height: 51px;
  flex: none;
  display: flex;
  align-items: center;
  border-bottom: 1px solid #c3c4c7;
  padding: 0 10px;
}
.data-label { font-size: 13px; color: #1d2327; width: 111px; margin-top: -3px; }
.sel {
  appearance: none;
  height: 30px;
  padding: 0 24px 0 8px;
  border: 1px solid #8c8f94;
  border-radius: 3px;
  font: 13px "Open Sans", sans-serif;
  color: #2c3338;
  background: #fff url("data:image/svg+xml,%3Csvg xmlns='http://www.w3.org/2000/svg' width='20' height='20'%3E%3Cpath d='M5 6l5 5 5-5 2 1-7 7-7-7 2-1z' fill='%23555'/%3E%3C/svg%3E") no-repeat right 5px top 55% / 16px 16px;
}
.sel.soft { border-color: #c3c4c7; border-radius: 4px; }
.sel.tall { height: 40px; width: 100%; border-radius: 4px; color: #50575e; }
.sel.near { padding-left: 5px; }
.type-sel { width: 210px; }
.type-help { margin-left: 11px; margin-top: -4px; }
.data-sep { width: 1px; height: 15px; background: #dcdcde; margin-left: 10px; }
.handles { width: 64px; height: 20px; flex: none; color: #787c82; }
.data-head .handles { margin-left: auto; margin-right: -1px; }
.data-body { flex: 1; display: flex; min-height: 0; }
.data-tabs {
  width: 274px;
  flex: none;
  margin: 0;
  padding: 0;
  list-style: none;
  background: #fafafa;
  border-right: 1px solid #eee;
}
.data-tabs li {
  height: 41px;
  display: flex;
  align-items: center;
  gap: 7px;
  padding-left: 10px;
  border-bottom: 1px solid #eee;
  color: #2271b1;
  font-size: 12.500px;
}
.data-tabs li.on { background: #eee; color: #555; height: 42px; }
.dt-icon { width: 14px; height: 14px; margin-top: -4px; }
.data-panel { flex: 1; min-width: 0; }
.defaults-row {
  height: 56px;
  display: flex;
  align-items: center;
  padding-left: 13px;
  border-bottom: 1px solid #eee;
}
.defaults-label { font-size: 12px; color: #50575e; width: 134px; margin-top: -4px; }
.defaults-row .help { width: 18px; height: 18px; margin-top: -3px; }
.defaults-sel { width: 170px; margin-left: 1px; }
.actions-row {
  height: 53px;
  display: flex;
  align-items: center;
  gap: 5px;
  padding: 0 14px 0 13px;
  border-bottom: 1px solid #eee;
}
.fill-btn { padding: 0; width: 101px; }
.fill-btn.gen-btn { width: 133px; }
.bulk-sel { width: 130px; }
.count {
  margin-left: auto;
  font-size: 11.500px;
  font-style: italic;
  color: #646970;
  margin-top: -5px;
}
.var-row {
  height: 50px;
  display: flex;
  align-items: center;
  padding-left: 13px;
  border-bottom: 1px solid #eee;
}
.tall-row { height: 51px; }
.var-id { width: 41px; font-size: 12.500px; color: #1d2327; margin-top: -4px; }
.var-sel { width: 131px; }
.var-tools {
  margin-left: auto;
  display: flex;
  align-items: center;
  gap: 13px;
  padding-right: 21px;
  font-size: 12.500px;
}
.burger {
  width: 11px;
  height: 8px;
  margin-right: 4px;
  border-top: 1px solid #999;
  border-bottom: 1px solid #999;
  position: relative;
}
.burger::after {
  content: "";
  position: absolute;
  left: 0;
  right: 0;
  top: 2.500px;
  height: 1px;
  background: #999;
}
.remove { color: #f00; }

.var-form {
  height: 810px;
  padding: 0 26px;
  background: #fdfdfd;
  border-bottom: 1px solid #eee;
  display: flex;
  flex-direction: column;
}
.form-top {
  height: 104px;
  flex: none;
  display: grid;
  grid-template-columns: 501px 501px;
  gap: 42px;
  border-bottom: 1px solid #eee;
}
.thumb { width: 58px; height: 58px; margin: 29px 0 0 3px; }
.sku { padding-top: 30px; }
.lab {
  height: 18px;
  margin-bottom: 2px;
  display: flex;
  justify-content: space-between;
  align-items: center;
  font-size: 12.500px;
}
.lab .help { margin: -4px -3px 0 0; }
.dotted { border-bottom: 1px dotted #50575e; line-height: 15px; }
.inp {
  display: block;
  width: 100%;
  height: 40px;
  padding: 0 5px;
  border: 1px solid #c3c4c7;
  border-radius: 4px;
  background: #fff;
  font: 13px "Open Sans", sans-serif;
  color: #50575e;
}
.inp::placeholder { color: #646970; }
.checks {
  height: 33px;
  flex: none;
  display: flex;
  align-items: center;
  padding-left: 7px;
  border-bottom: 1px solid #eee;
}
.chk { display: flex; align-items: center; gap: 5px; font-size: 12.500px; width: 182px; }
.chk span { margin-top: 2px; }
.chk input, .cat-item input {
  appearance: none;
  flex: none;
  width: 16px;
  height: 16px;
  margin: -4px 0 0;
  border: 1px solid #8c8f94;
  border-radius: 4px;
  background: #fff;
}
.chk input:checked, .cat-item input:checked {
  background: #fff url("data:image/svg+xml,%3Csvg xmlns='http://www.w3.org/2000/svg' viewBox='0 0 20 20'%3E%3Cpath d='M14.830 4.890l1.340.94-5.810 8.380H9.020L5.780 9.670l1.340-1.250 2.570 2.400z' fill='%233582c4'/%3E%3C/svg%3E") no-repeat center / 20px 20px;
}
.enabled { width: 90px; }
.down { width: 128px; }
.virt { width: 82px; }
.cols {
  flex: none;
  display: grid;
  grid-template-columns: 501px 501px;
  gap: 42px;
  margin-top: 14px;
}
.first-cols { margin-top: 28px; }
.weight-cols { margin-top: 30px; }
.var-form > .field { margin-top: 16px; }
.var-form > .field.wide-gap { margin-top: 17px; }
.joined { display: flex; }
.half .inp, .half .sel.tall { width: 50%; min-width: 0; }
.thirds .inp, .thirds .sel.tall { width: 33.330%; min-width: 0; }
.dims .inp { min-width: 0; width: 165px; }
.dims .inp:last-child { width: 171px; }
.stop-field .sel { margin-top: -2px; }
.area { height: 51px; resize: vertical; }

.actions-row.last { border-bottom: 0; height: 50px; gap: 5px; padding-left: 12px; }
.off-btn {
  border-color: #dcdcde;
  color: #a7aaad;
  background: #f6f7f7;
  width: 60px;
  padding: 0;
}
.save-btn { width: 99px; }

/* side column */
.side-box { margin-bottom: 20px; }
.side-head {
  height: 37px;
  display: flex;
  align-items: center;
  justify-content: space-between;
  padding: 0 8px 0 12px;
}
.side-head h2 {
  margin: 0;
  font-size: 13.200px;
  font-weight: 600;
  color: #1d2327;
}
.image-box { height: 288px; }
.image-box .side-head, .cat-box .side-head, .publish-box .side-head, .gallery-box .side-head {
  border-bottom: 1px solid #c3c4c7;
}
.side-body { padding: 11px 8px 0 10px; }
.woo-logo { display: block; width: 260px; height: 130px; font-family: "Open Sans", sans-serif; }
.image-help { display: block; margin: 1px 0 0 8px; }
.image-note { margin: 22px 0 21px; font-size: 12.500px; }
.side-body .danger-link { font-size: 12.500px; }

.cat-box { height: 325px; }
.cat-body { padding: 9px 13px 0 12px; }
.cat-tabs { display: flex; height: 28px; }
.cat-tab {
  height: 28px;
  line-height: 26px;
  font-size: 12.500px;
  padding: 0 5px;
}
.cat-tab.on {
  color: #2c3338;
  background: #fff;
  border: 1px solid #dcdcde;
  border-bottom: 0;
  position: relative;
  z-index: 1;
  margin-right: 6px;
}
.cat-list {
  height: 201px;
  margin-top: -1px;
  display: flex;
  border: 1px solid #dcdcde;
  overflow: hidden;
}
.cat-items { flex: 1; padding: 0 0 0 12px; margin-top: -3px; }
.cat-item {
  height: 23.900px;
  display: flex;
  align-items: center;
  gap: 7px;
  font-size: 12.500px;
}
.cat-item input { margin: 0; }
.scrollbar {
  position: relative;
  width: 15px;
  flex: none;
  background: #fafafa;
}
.sb-thumb {
  position: absolute;
  left: 3px;
  top: 91px;
  width: 9px;
  height: 86px;
  border-radius: 5px;
  background: #8f8f8f;
}
.sb-up, .sb-down {
  position: absolute;
  left: 3px;
  border: 4.500px solid transparent;
}
.sb-up { top: 5px; border-top: 0; border-bottom: 5px solid #8f8f8f; }
.sb-down { top: 184px; border-bottom: 0; border-top: 5px solid #8f8f8f; }
.add-cat { display: block; margin-top: 11px; font-size: 13px; }

.publish-box { height: 308px; display: flex; flex-direction: column; margin-top: 1px; }
.pub-body { flex: 1; padding: 10px 10px 0; font-size: 12.500px; }
.pub-preview { display: flex; justify-content: flex-end; margin-bottom: 13px; }
.pub-preview .btn { width: 119px; padding: 0; }
.pub-row { height: 18px; margin-bottom: 16px; display: flex; align-items: center; white-space: nowrap; }
.pub-row b, .pub-catalog b { font-weight: 600; color: #3c434a; }
.pub-icon { width: 20px; height: 20px; margin: 0 6px 0 0; color: #82878c; flex: none; }
.pub-catalog { line-height: 18px; }
.pub-foot {
  height: 71px;
  flex: none;
  padding: 10px 5px 0 10px;
  display: flex;
  justify-content: space-between;
  background: #f6f7f7;
  border-top: 1px solid #dcdcde;
  font-size: 12.500px;
}
.pub-links { display: flex; flex-direction: column; gap: 6px; padding-top: 1px; }
.update-wrap { position: relative; margin-top: 13px; }
.update-btn {
  display: flex;
  width: 78px;
  height: 42px;
  align-items: center;
  justify-content: center;
  border: 3px solid #5b2a86;
  outline: 2px solid #f6f7f7;
  outline-offset: -5px;
  color: #fff;
  background: #2271b1;
  font-size: 12.500px;
}
.cursor {
  position: absolute;
  left: 30px;
  top: 25px;
  width: 18px;
  height: 24px;
}
.tags-box { height: 38px; }
.gallery-box { height: 83px; }
.gallery-body {
  padding: 14px 12px 0;
  display: flex;
  align-items: flex-start;
  gap: 8px;
  font-size: 12.500px;
}
</style>
